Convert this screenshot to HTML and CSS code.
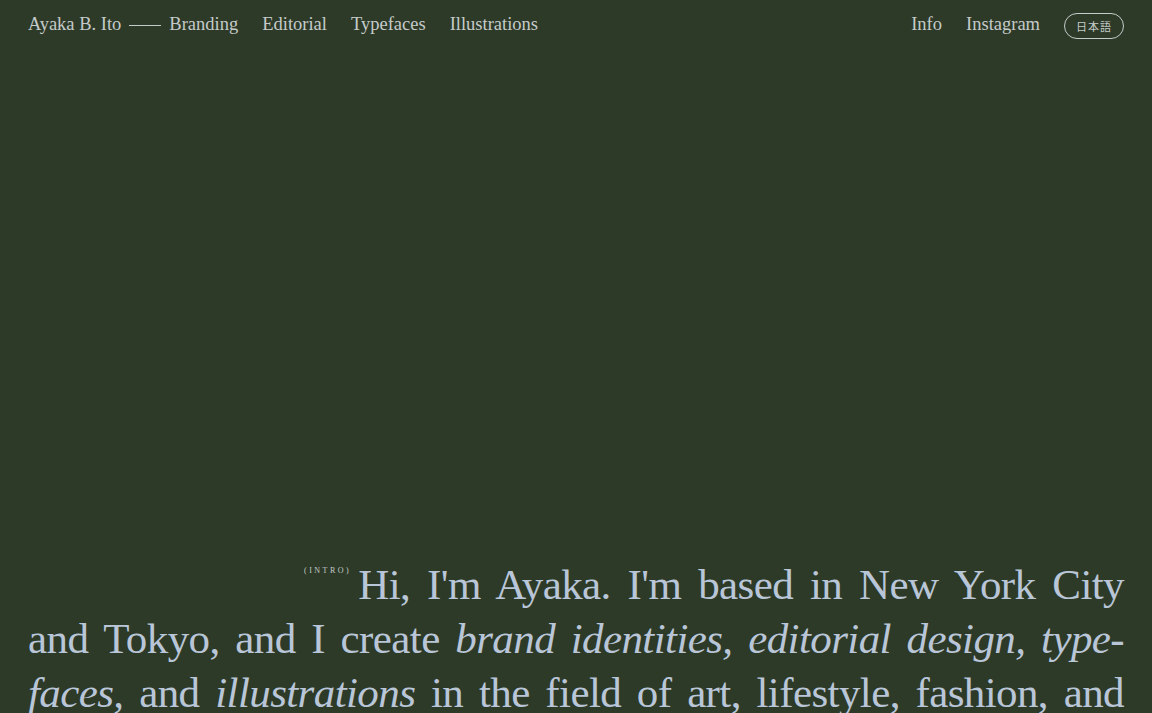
FILE: index.html
```html
<!DOCTYPE html>
<html lang="en">
<head>
<meta charset="utf-8">
<title>Ayaka B. Ito</title>
<link rel="stylesheet" href="styles.css">
</head>
<body>
<header class="site-header">
  <nav class="nav-left">
    <a class="brand" href="#">Ayaka B. Ito</a>
    <span class="dash"></span>
    <a class="nav-link" href="#">Branding</a>
    <a class="nav-link" href="#">Editorial</a>
    <a class="nav-link" href="#">Typefaces</a>
    <a class="nav-link" href="#">Illustrations</a>
  </nav>
  <nav class="nav-right">
    <a class="nav-link" href="#">Info</a>
    <a class="nav-link" href="#">Instagram</a>
    <a class="lang" href="#">日本語</a>
  </nav>
</header>
<main class="hero">
  <p class="intro"><span class="first"><span class="label">(INTRO)</span>Hi, I'm Ayaka. I'm based in New York City</span><br>and Tokyo, and I create <em>brand identities, editorial design, type-</em><br><em>faces,</em> and <em>illustrations</em> in the field of art, lifestyle, fashion, and<br>culture.</p>
</main>
</body>
</html>
```
FILE: styles.css
```css
html, body {
  margin: 0;
  padding: 0;
}
body {
  background: #2e3a28;
  color: #b9c6d8;
  font-family: "Liberation Serif", "Times New Roman", serif;
  overflow: hidden;
  height: 713px;
}
a {
  color: inherit;
  text-decoration: none;
}
.site-header {
  display: flex;
  justify-content: space-between;
  align-items: center;
  padding: 10px 28px 0 28px;
  height: 28px;
  color: #c4cbca;
  font-size: 18.5px;
}
.nav-left, .nav-right {
  display: flex;
  align-items: center;
  gap: 24px;
}
.dash {
  display: block;
  width: 32px;
  height: 1px;
  background: #c4cbca;
  margin: 2px -16px 0 -16px;
}
.lang {
  display: flex;
  align-items: center;
  justify-content: center;
  width: 58px;
  height: 24px;
  border: 1px solid #c4cbca;
  border-radius: 14px;
  font-family: "Noto Sans CJK JP", sans-serif;
  font-size: 11px;
  letter-spacing: 1px;
  margin-top: 4px;
}
.hero {
  padding: 520px 28px 0 28px;
}
.intro {
  margin: 0;
  font-size: 43px;
  line-height: 54px;
  letter-spacing: -0.6px;
  word-spacing: -2px;
  text-align: justify;
  text-align-last: justify;
}
.intro em {
  font-style: italic;
}
.first {
  padding-left: 276px;
}
.label {
  display: inline-block;
  vertical-align: top;
  font-size: 8px;
  line-height: 8px;
  letter-spacing: 2.5px;
  word-spacing: 0;
  margin-top: 9px;
  margin-right: 7px;
  color: #c4cbca;
}
```
